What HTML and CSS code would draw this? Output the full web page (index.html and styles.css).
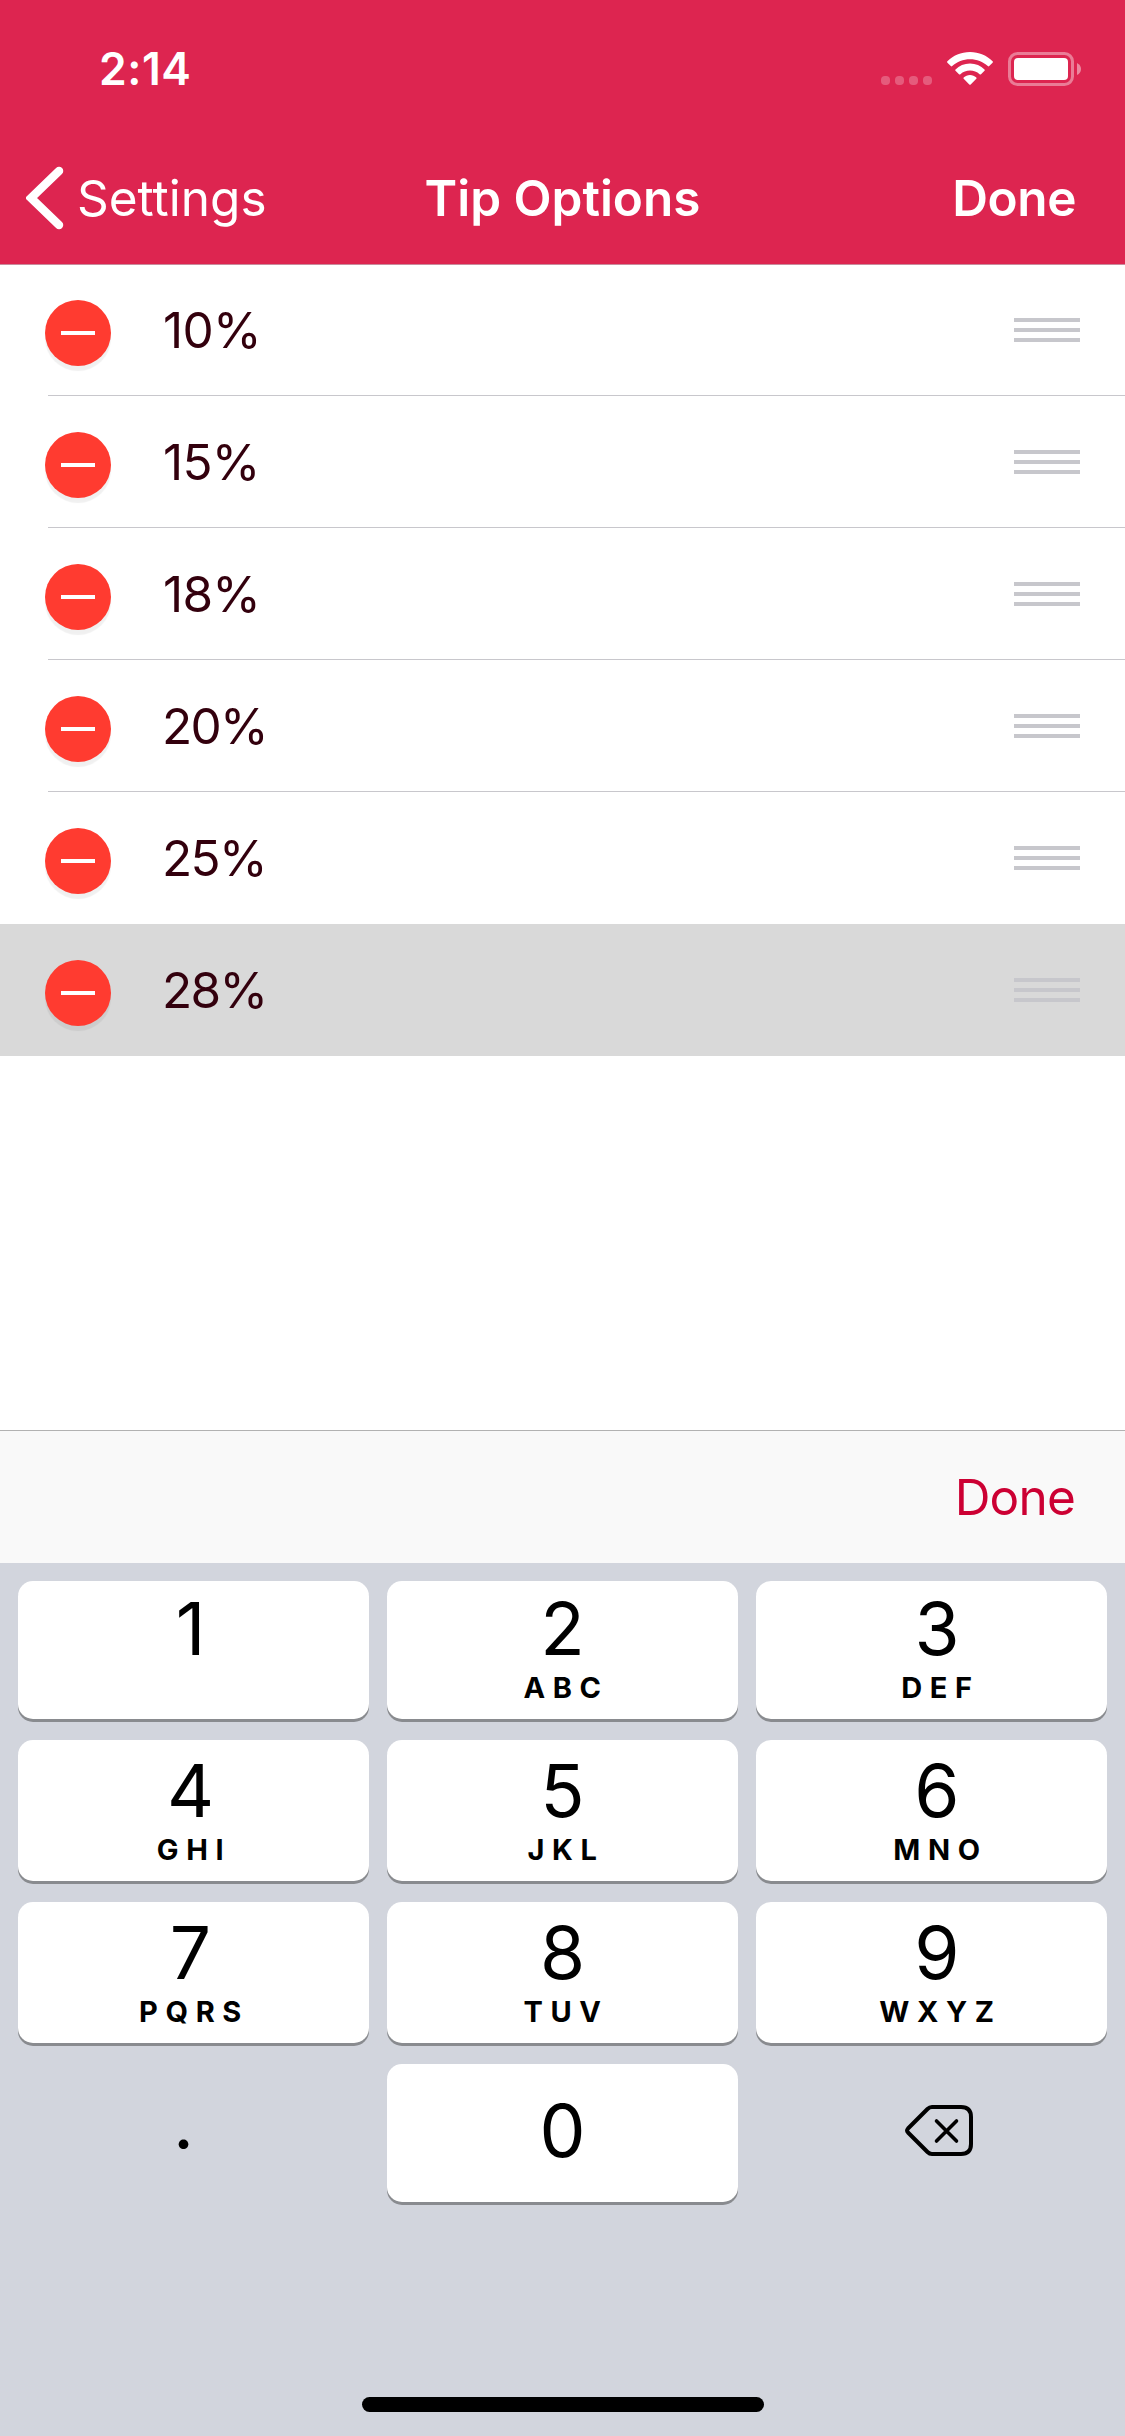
FILE: index.html
```html
<!DOCTYPE html>
<html lang="en">
<head>
  <meta charset="UTF-8" />
  <meta name="viewport" content="width=device-width, initial-scale=1.0" />
  <title>Tip Options</title>
  <link rel="stylesheet" href="styles.css">
</head>
<body>
  <header class="header">
    <div class="status-bar">
      <span class="time">2:14</span>
      <div class="status-icons">
        <div class="signal"><i></i><i></i><i></i><i></i></div>
        <svg class="wifi" width="46" height="34" viewBox="0 0 46 34" fill="#fff">
          <path d="M23 0C32 0 40 3.600 45.600 9.300Q46.200 10 45.600 10.700L42.200 14.100Q41.500 14.700 40.800 14.100C36 9.800 29.800 7.200 23 7.200S10 9.800 5.200 14.100Q4.500 14.700 3.800 14.100L0.400 10.700Q-0.200 10 0.400 9.300C6 3.600 14 0 23 0Z"/>
          <path d="M23 11.500C28.700 11.500 33.800 13.700 37.500 17.400Q38.200 18.100 37.500 18.800L34 22.200Q33.300 22.900 32.600 22.200C30 19.900 26.600 18.600 23 18.600S16 19.900 13.400 22.200Q12.700 22.900 12 22.200L8.500 18.800Q7.800 18.100 8.500 17.400C12.200 13.700 17.300 11.500 23 11.500Z"/>
          <path d="M23 23C25.400 23 27.600 23.900 29.300 25.400Q30 26.100 29.300 26.800L23.700 32.500Q23 33.200 22.300 32.500L16.700 26.800Q16 26.100 16.700 25.400C18.400 23.900 20.600 23 23 23Z"/>
        </svg>
        <svg class="battery" width="74" height="34" viewBox="0 0 74 34">
          <rect x="1.500" y="1.500" width="63" height="31" rx="8" fill="none" stroke="#fff" stroke-opacity=".4" stroke-width="3"/>
          <rect x="6" y="6" width="54" height="22" rx="4" fill="#fff"/>
          <path d="M69 11Q73 13 73 17T69 23Z" fill="#fff" fill-opacity=".45"/>
        </svg>
      </div>
    </div>
    <nav class="nav-bar">
      <a class="back">
        <svg width="38" height="64" viewBox="0 0 38 64">
          <path d="M33 5L5 32L33 59" fill="none" stroke="#fff" stroke-width="8.500" stroke-linecap="round" stroke-linejoin="miter"/>
        </svg>
        <span>Settings</span>
      </a>
      <h1 class="title">Tip Options</h1>
      <a class="nav-done">Done</a>
    </nav>
  </header>

  <main class="tips">
    <div class="tip-row"><span class="remove"></span><span class="tip one">10%</span><span class="handle"></span></div>
    <div class="tip-row"><span class="remove"></span><span class="tip one">15%</span><span class="handle"></span></div>
    <div class="tip-row"><span class="remove"></span><span class="tip one">18%</span><span class="handle"></span></div>
    <div class="tip-row"><span class="remove"></span><span class="tip">20%</span><span class="handle"></span></div>
    <div class="tip-row"><span class="remove"></span><span class="tip">25%</span><span class="handle"></span></div>
    <div class="tip-row selected"><span class="remove"></span><span class="tip">28%</span><span class="handle"></span></div>
  </main>

  <div class="toolbar"><a class="toolbar-done">Done</a></div>

  <section class="keyboard">
    <div class="keys">
      <div class="key top left"><b>1</b></div>
      <div class="key top"><b>2</b><small>ABC</small></div>
      <div class="key top right"><b>3</b><small>DEF</small></div>
      <div class="key left"><b>4</b><small>GHI</small></div>
      <div class="key"><b>5</b><small>JKL</small></div>
      <div class="key right"><b>6</b><small>MNO</small></div>
      <div class="key left"><b>7</b><small>PQRS</small></div>
      <div class="key"><b>8</b><small>TUV</small></div>
      <div class="key right"><b>9</b><small>WXYZ</small></div>
      <div class="key plain point"><b>.</b></div>
      <div class="key zero"><b>0</b></div>
      <div class="key plain delete">
        <svg width="68" height="51" viewBox="0 0 68 51" fill="none" stroke="#000" stroke-width="4" stroke-linecap="round" stroke-linejoin="round">
          <path d="M27 2H56Q66 2 66 12V39Q66 49 56 49H27Q24.500 49 22.500 47L3 27.500Q1.200 25.500 3 23.500L22.500 4Q24.500 2 27 2Z"/>
          <path d="M31.500 16L51.500 36M51.500 16L31.500 36" stroke-width="3.600"/>
        </svg>
      </div>
    </div>
    <div class="home-indicator"></div>
  </section>
</body>
</html>
```

FILE: styles.css
```css
* {
  box-sizing: border-box;
  margin: 0;
  padding: 0;
}

body {
  width: 1125px;
  height: 2436px;
  display: flex;
  flex-direction: column;
  font-family: Inter, "Liberation Sans", sans-serif;
  font-size: 49.5px;
  background: #fff;
  overflow: hidden;
}

/* header */
.header {
  height: 265px;
  background: #dd2550;
  border-bottom: 1px solid #c98b9c;
  color: #fff;
}

.status-bar {
  height: 132px;
  padding: 6px 43px 0 99px;
  display: flex;
  justify-content: space-between;
  align-items: center;
}

.time {
  font-size: 44.5px;
  font-weight: 600;
  letter-spacing: 0.5px;
}

.status-icons {
  display: flex;
  align-items: center;
}

.signal {
  display: flex;
  gap: 5px;
  margin: 23px 15px 0 0;
}

.signal i {
  width: 9px;
  height: 9px;
  border-radius: 4px;
  background: rgba(255, 255, 255, 0.25);
}

.wifi {
  margin-right: 15px;
}

.nav-bar {
  height: 132px;
  padding: 0 49px 0 26px;
  display: grid;
  grid-template-columns: 1fr auto 1fr;
  align-items: center;
}

.back {
  display: flex;
  align-items: center;
  gap: 13px;
}

.title,
.nav-done {
  font-size: 49.5px;
  font-weight: 600;
}

.title {
  margin-left: 23px;
}

.nav-done {
  justify-self: end;
  letter-spacing: -0.4px;
}

/* list */
.tips {
  flex: 1;
  margin-top: -1px;
}

.tip-row {
  height: 132px;
  padding: 0 45px;
  display: flex;
  align-items: center;
  background: linear-gradient(#c8c7cc, #c8c7cc) 48px 131px no-repeat;
  background-size: 100% 1px;
}

.tip-row:first-child {
  padding-bottom: 1px;
  border-top: 1px solid #c98b9c;
  background-position: 48px 130px;
}

.tip-row:nth-child(5) {
  background: none;
}

.tip-row.selected {
  background: #d9d9d9;
}

.remove {
  width: 66px;
  height: 66px;
  margin-top: 6px;
  border-radius: 50%;
  background: linear-gradient(#fff, #fff) center / 34px 4px no-repeat #ff3b30;
  box-shadow: 0 5px 1px rgba(0, 0, 0, 0.06);
}

.tip {
  margin-left: 51px;
  color: #33000d;
  letter-spacing: -1.7px;
}

.tip.one {
  margin-left: 52px;
  letter-spacing: -0.7px;
}

.handle {
  width: 66px;
  height: 24px;
  margin-left: auto;
  background: repeating-linear-gradient(#c7c7cc 0 4px, transparent 4px 10px);
}

/* input accessory */
.toolbar {
  height: 133px;
  padding-right: 50px;
  display: flex;
  justify-content: flex-end;
  align-items: center;
  background: #f9f9f9;
  border-top: 1px solid #b2b2b2;
}

.toolbar-done {
  color: #cc0033;
  letter-spacing: -0.8px;
}

/* keyboard */
.keyboard {
  height: 873px;
  padding: 18px;
  background: #d2d5dd;
}

.keys {
  display: grid;
  grid-template-columns: repeat(3, 351px);
  grid-template-rows: 138px 141px 141px 138px;
  gap: 21px 18px;
}

.key {
  padding-top: 10px;
  display: flex;
  flex-direction: column;
  align-items: center;
  border-radius: 15px;
  background: #fff;
  box-shadow: 0 3px 0 #898b8f;
}

.key.top {
  padding-top: 7px;
}

.key.left {
  padding-right: 6px;
}

.key.right {
  padding-left: 11px;
}

.key b {
  font-size: 73px;
  font-weight: 400;
  line-height: 81px;
}

.key small {
  font-size: 29px;
  font-weight: 700;
  line-height: 38px;
  letter-spacing: 7.6px;
  margin-right: -7px;
}

.key.zero {
  padding-top: 26px;
}

.key.plain {
  background: none;
  box-shadow: none;
}

.key.point {
  padding: 18px 20px 0 0;
}

.key.delete {
  padding: 41px 0 0 15px;
}

.home-indicator {
  width: 402px;
  height: 15px;
  margin: 195px auto 0;
  border-radius: 8px;
  background: #000;
}
```
